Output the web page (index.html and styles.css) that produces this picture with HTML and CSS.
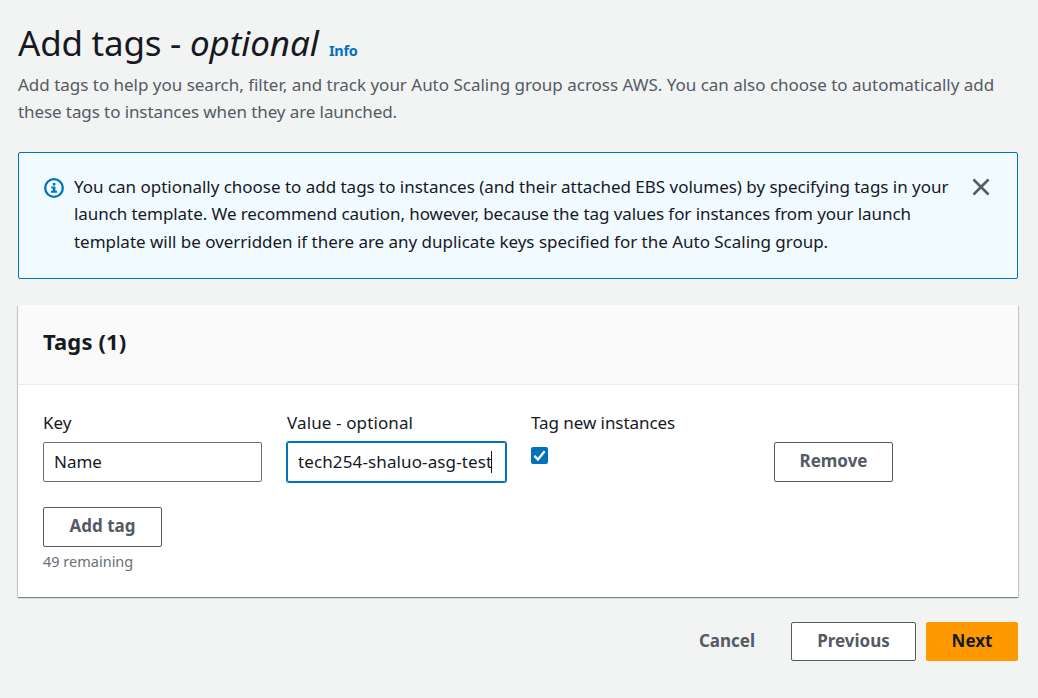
FILE: index.html
```
<!DOCTYPE html>
<html lang="en">
<head>
<meta charset="utf-8">
<title>Add tags</title>
<link rel="stylesheet" href="styles.css">
</head>
<body>
<main class="page">
  <header class="header">
    <h1 class="title"><span class="t-main">Add tags - </span><em class="t-opt">optional</em><a class="info">Info</a></h1>
    <p class="desc"><span class="d1">Add tags to help you search, filter, and track your Auto Scaling group across AWS. You can also choose to automatically add</span><br><span class="d2">these tags to instances when they are launched.</span></p>
  </header>
  <section class="alert">
    <svg class="alert-icon" viewBox="0 0 20 20"><circle cx="10" cy="10" r="8.8" fill="none" stroke="#0073bb" stroke-width="2.3"/><path d="M8.8 5h2.600v2.400H8.800zM7.300 8.400h4.100v4.400h1.600v2H7v-2h1.800v-2.400H7.300z" fill="#0073bb"/></svg>
    <p class="alert-text"><span class="a1">You can optionally choose to add tags to instances (and their attached EBS volumes) by specifying tags in your</span><br><span class="a2">launch template. We recommend caution, however, because the tag values for instances from your launch</span><br><span class="a3">template will be overridden if there are any duplicate keys specified for the Auto Scaling group.</span></p>
    <svg class="close" viewBox="0 0 18 18"><path d="M1.500 1.500l15 15M16.500 1.500l-15 15" stroke="#545b64" stroke-width="2.600" fill="none"/></svg>
  </section>
  <section class="card">
    <div class="card-head"><h2 class="card-title">Tags (1)</h2></div>
    <div class="card-body">
      <div class="grid">
        <div class="field"><label class="label">Key</label><div class="input">Name</div></div>
        <div class="field"><label class="label l2">Value - optional</label><div class="input focus"><span class="i2">tech254-shaluo-asg-test</span><i class="caret"></i></div></div>
        <div class="field"><label class="label l3">Tag new instances</label><svg class="check" viewBox="0 0 17 17"><rect width="17" height="17" rx="2" fill="#0073bb"/><path d="M3.300 8.700l3.600 3.700 6.700-8.200" stroke="#fff" stroke-width="2.300" fill="none"/></svg></div>
        <div class="field last"><button class="btn remove">Remove</button></div>
      </div>
      <button class="btn add">Add tag</button>
      <p class="remaining">49 remaining</p>
    </div>
  </section>
  <footer class="footer">
    <button class="btn cancel">Cancel</button>
    <button class="btn previous">Previous</button>
    <button class="btn next">Next</button>
  </footer>
</main>
</body>
</html>
```
FILE: styles.css
```
* { box-sizing: border-box; }
body { margin: 0; background: #f2f3f3; color: #16191f; font: 17px/27.5px "Noto Sans", sans-serif; white-space: nowrap; }
h1, h2, p { margin: 0; font-weight: 400; }
.page { width: 1038px; height: 698px; padding: 21px 20px 0 18px; overflow: hidden; }
.header { height: 131px; }
.title { font-size: 35px; line-height: 44px; height: 49.600px; white-space: pre; }
.t-main { letter-spacing: -.23px; }
.t-opt { letter-spacing: -.12px; }
.info { margin-left: 10.500px; color: #0073bb; font-size: 14.500px; font-weight: 700; letter-spacing: -.35px; }
.desc { color: #545b64; line-height: 27.200px; }
.d1 { letter-spacing: -.014px; }
.d2 { letter-spacing: -.09px; }
.alert { display: flex; align-items: flex-start; height: 127px; padding: 19.600px 27px 0 25px; border: 1px solid #0073bb; border-radius: 2px; background: #f1faff; }
.alert-icon { flex: none; width: 20px; height: 20px; margin: 5.400px 10px 0 0; }
.alert-text { flex: 1; }
.a1 { letter-spacing: -.02px; }
.a2 { letter-spacing: -.073px; }
.a3 { letter-spacing: -.02px; }
.close { flex: none; width: 18px; height: 18px; margin-top: 5.400px; }
.card { height: 292px; margin-top: 26px; background: #fff; box-shadow: 0 1px 1px 0 rgba(0,28,36,.3), 1px 1px 1px 0 rgba(0,28,36,.15), -1px 1px 1px 0 rgba(0,28,36,.15); }
.card-head { height: 80px; padding: 22px 25px 0; background: #fafafa; border-bottom: 1px solid #eaeded; }
.card-title { font-size: 22px; font-weight: 700; line-height: 28px; letter-spacing: .12px; }
.card-body { padding: 24px 25px 0; }
.grid { display: grid; grid-template-columns: 219px 219px 218px 119px; column-gap: 25px; height: 98px; }
.label { display: block; height: 33px; }
.l2 { letter-spacing: .12px; }
.l3 { letter-spacing: -.06px; }
.i2 { letter-spacing: .12px; }
.input { display: flex; align-items: center; height: 40px; padding-left: 10px; border: 1px solid #687078; border-radius: 2px; }
.focus { border-color: #0073bb; box-shadow: 0 0 0 1px #0073bb; }
.caret { width: 1px; height: 22px; margin-left: -1px; background: #16191f; }
.check { display: block; width: 17px; height: 17px; margin-top: 5px; }
.last { padding-top: 33px; }
.btn { display: flex; align-items: center; justify-content: center; height: 40px; padding: 0 0 2px; border: 1px solid #545b64; border-radius: 2px; background: #fff; color: #545b64; font: 700 17px/26px "Noto Sans", sans-serif; }
.remove, .add { width: 119px; }
.remaining { color: #687078; font-size: 14.500px; line-height: 22px; margin-top: 3px; }
.footer { display: flex; justify-content: flex-end; height: 39px; margin-top: 25px; gap: 10px; }
.footer .btn { height: 39px; }
.cancel { width: 108px; border: 0; background: none; }
.previous { width: 125px; }
.footer .next { width: 92px; background: #f90; border-color: #f90; color: #16191f; }
```
